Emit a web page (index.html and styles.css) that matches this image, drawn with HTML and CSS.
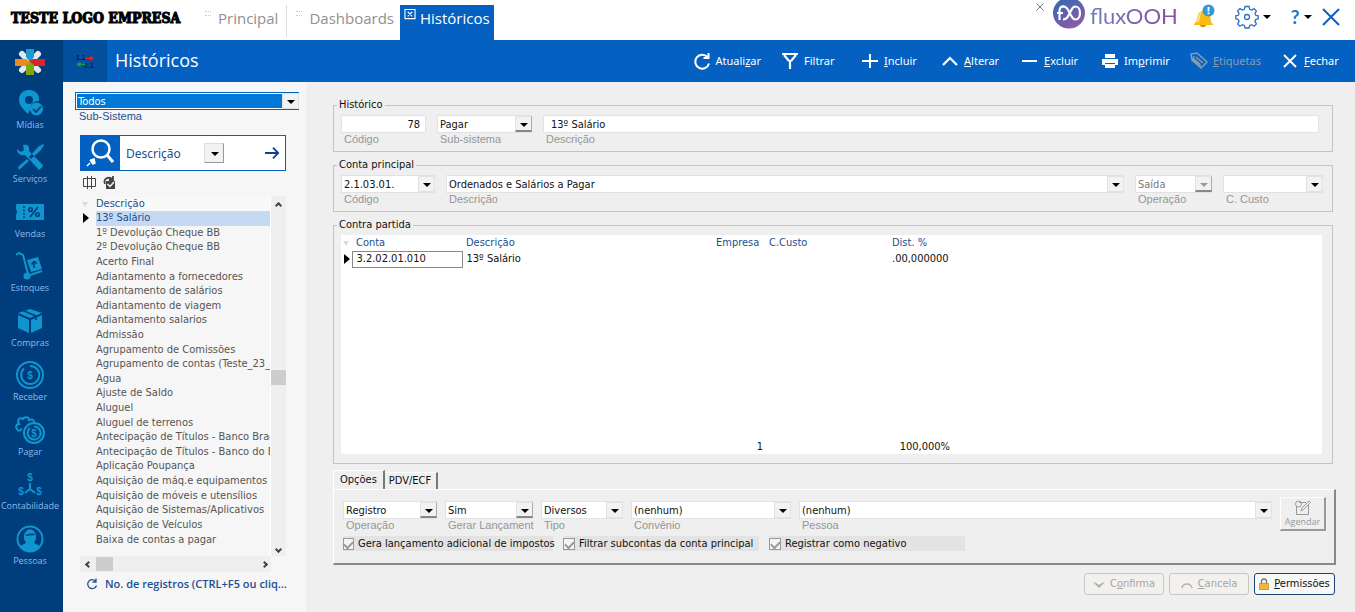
FILE: index.html
```html
<!DOCTYPE html>
<html lang="pt-BR">
<head>
<meta charset="utf-8">
<title>Históricos</title>
<meta name="viewport" content="width=device-width, initial-scale=1">
<link rel="stylesheet" href="styles.css">
</head>
<body>
<header class="top">
  <div class="company">TESTE LOGO EMPRESA</div>
  <nav class="tabs">
    <a class="tab" href="#"><span class="grip"></span>Principal</a>
    <a class="tab tab-dash" href="#"><span class="grip"></span>Dashboards</a>
    <a class="tab tab-active" href="#"><svg class="tab-close" viewBox="0 0 12 12"><path d="M.5 .5h11v10h-11zM3.500 3l5 5M8.500 3l-5 5" fill="none" stroke="#fff" stroke-width="1.200"/></svg>Históricos</a>
  </nav>
  <div class="top-right">
    <button class="mini-close" aria-label="Fechar aba"><svg viewBox="0 0 8 8"><path d="M.5 .5l7 7M7.500 .5l-7 7" stroke="#777" fill="none"/></svg></button>
    <div class="brand">
      <svg class="brand-mark" viewBox="0 0 32 30"><defs><linearGradient id="g" x1="0" x2="0.600" y1="0" y2="1"><stop offset="0" stop-color="#2c69b3"/><stop offset="1" stop-color="#8a5cab"/></linearGradient></defs><ellipse cx="16" cy="13" rx="16" ry="15.500" fill="url(#g)"/><path d="M6.500 20V11c0-4 2-5 5-4.500M4 13h6M10 6.500c5 0 5 4 7 7s2 6 5.500 6c6 0 6-13 0-13-3.500 0-3.500 3-5.500 6s-2 7-7 7" fill="none" stroke="#fff" stroke-width="2.200"/></svg>
      <span class="brand-name">fluxOOH</span>
    </div>
    <button class="bell" aria-label="Notificações"><svg viewBox="0 0 24 24"><path d="M2 20c3-2 3-5 4-9 1-5 9-6 12-1 1 4 0 8 3 10v1H2z" fill="#f9bc12"/><path d="M7 18c1-4 1-8 3-11-4 2-4 8-5 11z" fill="#fde08a"/><path d="M8 21h6c0 3-6 3-6 0z" fill="#d98e0b"/><circle cx="16.500" cy="6.500" r="6" fill="#3499d3"/><path d="M16.500 3v4.500M16.500 8.600v1.700" stroke="#fff" stroke-width="1.800"/></svg></button>
    <button class="menu-btn" aria-label="Configurações"><svg class="gear" viewBox="0 0 24 24"><path d="M10 1.500h4l.7 2.800 1.900.8 2.500-1.500 2.300 2.500-1.500 2.300.8 1.900 2.500.5v3l-2.500.7-.8 1.900 1.500 2.500-2.300 2.300-2.500-1.500-1.900.8-.7 2.500h-4l-.7-2.500-1.900-.8-2.500 1.500-2.300-2.300 1.500-2.500-.8-1.900L.8 13.800v-3l2.500-.5.8-1.900-1.500-2.300 2.300-2.500 2.500 1.500 1.900-.8z" fill="none" stroke="#2473c8" stroke-width="1.300"/><circle cx="12" cy="12" r="2.500" fill="none" stroke="#2473c8" stroke-width="1.300"/></svg><i class="caret"></i></button>
    <button class="menu-btn" aria-label="Ajuda"><span class="question">?</span><i class="caret"></i></button>
    <button class="app-close" aria-label="Fechar"><svg viewBox="0 0 18 16"><path d="M1 0l16 16M17 0L1 16" stroke="#0961c0" stroke-width="2" fill="none"/></svg></button>
  </div>
</header>
<div class="body">
  <aside class="side">
    <a class="home" href="#" aria-label="Início"><svg viewBox="0 0 30 28"><g stroke="#e4e8ec" stroke-width="6" stroke-linecap="round"><path d="M7 6l16 16M23 6L7 22"/></g><path d="M11 1h8v8l-4 5-4-5z" fill="#1c9ad6"/><path d="M0 11h11l4 3-4 4H0z" fill="#ef8a1d"/><path d="M30 11H18l-4 2 4 5h12z" fill="#d9252a"/><path d="M11 27h8V17l-4-3-4 3z" fill="#7fa712"/></svg></a>
    <nav class="modules">
      <a href="#"><svg viewBox="0 0 30 28"><path fill-rule="evenodd" d="M14 1c7 0 11 5 10 11-6 0-9 4-9 9l-2 4C8 20 4 16 4 11 4 5 8 1 14 1zm0 6a4 4 0 1 0 0 8 4 4 0 0 0 0-8z"/><circle cx="21.500" cy="20" r="6.500"/><path class="cut" d="M18 20l3 3 5-5.500"/></svg>Mídias</a>
      <a href="#"><svg viewBox="0 0 30 28"><path d="M2 6l4 3 3-2-1-5c5-1 7 2 6 6l13 13c2 3-2 6-4 4L10 12c-4 1-8-1-8-6zM28 1l-5 3-9 10 2 2L26 7l3-5zM12 16L3 24l1 3 10-9z"/><path d="M20 15l8 8-4 4-7-8z"/></svg>Serviços</a>
      <a href="#"><svg viewBox="0 0 30 28"><path d="M2 6h26q1 0 1 1v14q0 1-1 1H2q-1 0-1-1v-4q2-3 0-6V7q0-1 1-1z"/><path class="cut" d="M9 8v12" stroke-dasharray="2 1.500"/><path class="cut" d="M23 9l-8 10"/><circle class="cut" cx="15.500" cy="11.500" r="1.800"/><circle class="cut" cx="22.500" cy="16.500" r="1.800"/></svg>Vendas</a>
      <a href="#"><svg viewBox="0 0 30 28"><path class="line" d="M1 3l3-2 4 2 5 19M15 23l12-4"/><circle cx="12" cy="24" r="3.500"/><path d="M12 8l11-3 4 12-11 3z"/><path class="cut" d="M19 16v-6M16.500 12.500l2.500-3 3 2"/></svg>Estoques</a>
      <a href="#"><svg viewBox="0 0 30 28"><path d="M15 2l12 4-12 5L3 6zM3 8l11 5v13L3 21zM27 8l-11 5v13l11-5z"/><path class="cut" d="M8 3.500L21 9v4"/></svg>Compras</a>
      <a href="#"><svg viewBox="0 0 30 28"><circle class="line" cx="15" cy="14" r="13"/><path class="line" d="M9 7.500a9 9 0 1 0 6-2.500"/><text x="15" y="18">$</text></svg>Receber</a>
      <a href="#"><svg viewBox="0 0 30 28"><path class="line" d="M3 14c-3-2-2-6 1-6-2-4 0-7 4-5 2-3 6-2 6 1 4-1 5 0 5 2M7 13c-2 1-3 3-4 1"/><circle class="line" cx="19" cy="17" r="10"/><path class="line" d="M15 12a6.500 6.500 0 1 0 4-1.500"/><text x="19" y="20.500">$</text></svg>Pagar</a>
      <a href="#"><svg viewBox="0 0 30 28"><path class="line" d="M15 13v6l-5 4M15 19l5 4"/><text x="15" y="11">$</text><text x="6" y="25">$</text><text x="24" y="25">$</text></svg>Contabilidade</a>
      <a href="#"><svg viewBox="0 0 30 28"><circle class="line" cx="15" cy="14" r="12.500"/><path d="M9 12c0-10 12-10 12 0 0 4-2 5-2 6l6 3c-5 7-15 7-20 0l6-3c0-1-2-2-2-6z"/><path class="cut" d="M11 10c1 1 6-2 8 0"/></svg>Pessoas</a>
    </nav>
  </aside>
  <main class="main">
    <div class="titlebar">
      <div class="title-icon"><svg viewBox="0 0 18 14"><text x="0" y="6">1.1</text><text x="8" y="14">2.1</text><path d="M9 3.500h5V1.500l4 2.700-4 2.700V5H9z" fill="#e3202a"/><path d="M9 9.500H4.500V7.500L0 10.200l4.500 3V11H9z" fill="#159a56"/></svg></div>
      <h1>Históricos</h1>
      <div class="toolbar">
        <button><svg viewBox="0 0 18 16"><path d="M14.500 4A7 7 0 1 0 16 10.500M15.500 0v5h-5" fill="none" stroke="#fff" stroke-width="2"/></svg><span>Atuali<u>z</u>ar</span></button>
        <button><svg viewBox="0 0 18 16"><path d="M1 1h16M3 2l5 6M15 2l-5 6M9 7v9" fill="none" stroke="#fff" stroke-width="2.200"/></svg><span>Filtrar</span></button>
        <button><svg viewBox="0 0 18 16"><path d="M9 1v14M1 8h16" stroke="#fff" stroke-width="2"/></svg><span><u>I</u>ncluir</span></button>
        <button><svg viewBox="0 0 18 16"><path d="M2 12l7-7 7 7" fill="none" stroke="#fff" stroke-width="2.200"/></svg><span><u>A</u>lterar</span></button>
        <button><svg viewBox="0 0 18 16"><path d="M1 8h15" stroke="#fff" stroke-width="2"/></svg><span><u>E</u>xcluir</span></button>
        <button><svg viewBox="0 0 18 16"><path d="M4 1h10v4H4zM1 6h16v6h-3v-2H4v2H1zM4 11h10v4H4z" fill="#fff"/></svg><span>Im<u>p</u>rimir</span></button>
        <button disabled><svg viewBox="0 0 18 16"><path d="M1 1l6-1 10 9-6 6L2 7zM4 3l-1 3 8 7M6 4l7 6M4 6l6 5" fill="none" stroke="#8b9bb0" stroke-width="1.500"/></svg><span><u>E</u>tiquetas</span></button>
        <button><svg viewBox="0 0 18 16"><path d="M3 2l12 12M15 2L3 14" stroke="#fff" stroke-width="1.900"/></svg><span><u>F</u>echar</span></button>
      </div>
    </div>
    <div class="content">
      <section class="browse">
        <div class="combo combo-sub"><select id="subsys"><option>Todos</option></select></div>
        <label class="sub-label" for="subsys">Sub-Sistema</label>
        <div class="search">
          <span class="search-icon"><svg viewBox="0 0 30 28"><circle cx="15" cy="10" r="8.500" fill="none" stroke="#fff" stroke-width="2.500"/><path d="M21 16l6 7" stroke="#fff" stroke-width="3"/><path d="M1 27l3-3M4 21l3 4M5 21l3-1 1 4-2 1z" stroke="#fff" stroke-width="1.500" fill="#fff"/></svg></span>
          <div class="combo combo-search"><select aria-label="Campo de busca"><option>Descrição</option></select></div>
          <button class="go" aria-label="Buscar"><svg viewBox="0 0 14 12"><path d="M0 6h13M8 .7L13.200 6 8 11.300" fill="none" stroke="#0f3f9c" stroke-width="1.800"/></svg></button>
        </div>
        <div class="mini-tools">
          <button aria-label="Colunas"><svg viewBox="0 0 13 13"><path d="M.5 2.500h12v8H.5zM4.500 0v13M8.500 0v13" fill="none" stroke="#444"/></svg></button>
          <button aria-label="Marcar"><svg viewBox="0 0 13 13"><path d="M3 5h9v8H3z" fill="#444"/><path d="M2 8C0 3 5 0 9 3M10 0v4H6" fill="none" stroke="#444" stroke-width="1.800"/><path d="M4.500 8L7 10.500l4-4.500" fill="none" stroke="#f5f5f5" stroke-width="1.500"/></svg></button>
        </div>
        <div class="list">
          <div class="list-view">
            <table>
              <thead><tr><th class="mark"><i class="sort"></i></th><th>Descrição</th></tr></thead>
              <tbody>
                <tr class="selected"><td class="mark"><i class="pointer"></i></td><td>13º Salário</td></tr>
                <tr><td></td><td>1º Devolução Cheque BB</td></tr>
                <tr><td></td><td>2º Devolução Cheque BB</td></tr>
                <tr><td></td><td>Acerto Final</td></tr>
                <tr><td></td><td>Adiantamento a fornecedores</td></tr>
                <tr><td></td><td>Adiantamento de salários</td></tr>
                <tr><td></td><td>Adiantamento de viagem</td></tr>
                <tr><td></td><td>Adiantamento salarios</td></tr>
                <tr><td></td><td>Admissão</td></tr>
                <tr><td></td><td>Agrupamento de Comissões</td></tr>
                <tr><td></td><td>Agrupamento de contas (Teste_23_0</td></tr>
                <tr><td></td><td>Agua</td></tr>
                <tr><td></td><td>Ajuste de Saldo</td></tr>
                <tr><td></td><td>Aluguel</td></tr>
                <tr><td></td><td>Aluguel de terrenos</td></tr>
                <tr><td></td><td>Antecipação de Títulos - Banco Brade</td></tr>
                <tr><td></td><td>Antecipação de Títulos - Banco do Br</td></tr>
                <tr><td></td><td>Aplicação Poupança</td></tr>
                <tr><td></td><td>Aquisição de máq.e equipamentos</td></tr>
                <tr><td></td><td>Aquisição de móveis e utensílios</td></tr>
                <tr><td></td><td>Aquisição de Sistemas/Aplicativos</td></tr>
                <tr><td></td><td>Aquisição de Veículos</td></tr>
                <tr><td></td><td>Baixa de contas a pagar</td></tr>
              </tbody>
            </table>
          </div>
          <div class="vbar"><i class="chev up"></i><i class="vthumb"></i><i class="chev down"></i></div>
          <div class="hbar"><i class="chev left"></i><i class="hthumb"></i><i class="chev right"></i></div>
        </div>
        <button class="count"><svg viewBox="0 0 12 12"><path d="M9.500 3A4.500 4.500 0 1 0 10.500 7.500M10 .5v3.500H6.500" fill="none" stroke="#27538f" stroke-width="1.300"/></svg><span>No. de registros (CTRL+F5 ou cliq...</span></button>
      </section>
      <form class="form">
        <fieldset>
          <legend>Histórico</legend>
          <div class="row row-hist">
            <div class="field"><input id="cod" class="num" value="78"><label for="cod">Código</label></div>
            <div class="field"><div class="combo raised"><select id="sub"><option>Pagar</option></select></div><label for="sub">Sub-sistema</label></div>
            <div class="field"><input id="desc" value="13º Salário"><label for="desc">Descrição</label></div>
          </div>
        </fieldset>
        <fieldset>
          <legend>Conta principal</legend>
          <div class="row row-conta">
            <div class="field"><div class="combo"><select id="conta"><option>2.1.03.01.</option></select></div><label for="conta">Código</label></div>
            <div class="field"><div class="combo"><select id="cdesc"><option>Ordenados e Salários a Pagar</option></select></div><label for="cdesc">Descrição</label></div>
            <div class="field"><div class="combo raised off"><select id="oper" disabled><option>Saída</option></select></div><label for="oper">Operação</label></div>
            <div class="field"><div class="combo"><select id="custo"><option></option></select></div><label for="custo">C. Custo</label></div>
          </div>
        </fieldset>
        <fieldset class="grow">
          <legend>Contra partida</legend>
          <table class="grid">
            <colgroup><col class="c-mark"><col class="c-conta"><col class="c-desc"><col class="c-emp"><col class="c-custo"><col class="c-dist"><col></colgroup>
            <thead><tr><th class="mark"><i class="sort"></i></th><th>Conta</th><th>Descrição</th><th>Empresa</th><th>C.Custo</th><th>Dist. %</th><th></th></tr></thead>
            <tbody>
              <tr class="line-row"><td class="mark"><i class="pointer"></i></td><td class="focus">3.2.02.01.010</td><td>13º Salário</td><td></td><td></td><td>.00,000000</td><td></td></tr>
              <tr><td colspan="7"></td></tr>
            </tbody>
            <tfoot><tr><td></td><td></td><td></td><td class="right">1</td><td></td><td class="right">100,000%</td><td></td></tr></tfoot>
          </table>
        </fieldset>
        <div class="options">
          <div class="opt-tabs"><button type="button" class="opt-tab current">Opções</button><button type="button" class="opt-tab">PDV/ECF</button></div>
          <div class="opt-panel">
            <div class="opt-fields">
              <div class="field"><div class="combo raised"><select id="o1"><option>Registro</option></select></div><label for="o1">Operação</label></div>
              <div class="field"><div class="combo raised"><select id="o2"><option>Sim</option></select></div><label for="o2">Gerar Lançament</label></div>
              <div class="field"><div class="combo"><select id="o3"><option>Diversos</option></select></div><label for="o3">Tipo</label></div>
              <div class="field"><div class="combo"><select id="o4"><option>(nenhum)</option></select></div><label for="o4">Convênio</label></div>
              <div class="field"><div class="combo"><select id="o5"><option>(nenhum)</option></select></div><label for="o5">Pessoa</label></div>
              <button type="button" class="schedule" disabled><svg viewBox="0 0 17 15"><path d="M2.500 6v8.500h12V4M5 2.500h7M7 11l1-3 7-7 1.500 1.500-7 7z" fill="none" stroke="#999"/><circle cx="4.500" cy="4" r="3" fill="none" stroke="#999"/></svg><span>Agendar</span></button>
            </div>
            <div class="checks">
              <label><input type="checkbox" checked>Gera lançamento adicional de impostos</label>
              <label><input type="checkbox" checked>Filtrar subcontas da conta principal</label>
              <label><input type="checkbox" checked>Registrar como negativo</label>
            </div>
          </div>
        </div>
        <div class="actions">
          <button type="button" disabled><svg viewBox="0 0 12 8"><path d="M0 2l6 6 6-6-3 1-3 2-3-2z" fill="#a6b3a2"/></svg><span>C<u>o</u>nfirma</span></button>
          <button type="button" disabled><svg viewBox="0 0 12 8"><path d="M1 8c1-4 3-4 5-4s4 0 5 4" fill="none" stroke="#b5b0ae" stroke-width="1.500"/></svg><span><u>C</u>ancela</span></button>
          <button type="button" class="perm"><svg viewBox="0 0 10 12"><path d="M2.500 6V3.500a2.500 2.500 0 0 1 5 0V6" fill="none" stroke="#777" stroke-width="1.300"/><path d="M.5 5.500h9v6h-9z" fill="#efb937" stroke="#b98518" stroke-width=".7"/></svg><span><u>P</u>ermissões</span></button>
        </div>
      </form>
    </div>
  </main>
</div>
</body>
</html>
```

FILE: styles.css
```css
:root {
  --ui: "DejaVu Sans Condensed", "Noto Sans", sans-serif;
  --segoe: "Open Sans", "Noto Sans", sans-serif;
  --blue: #0461c1;
  --link: #1b4f91;
}
* { box-sizing: border-box; }
body {
  margin: 0;
  min-height: 100vh;
  display: flex;
  flex-direction: column;
  font: 11px/14px var(--ui);
  color: #111;
  background: #efefef;
}
button, input, select { font: inherit; color: inherit; margin: 0; padding: 0; border: 0; background: none; border-radius: 0; outline: 0; }
a { color: inherit; text-decoration: none; }
svg { display: block; flex: none; overflow: visible; }

/* top bar */
.top { display: flex; height: 40px; background: #fff; }
.company { width: 195px; padding: 8px 0 0 11px; font: bold 14px/20px "DejaVu Serif Condensed", "DejaVu Serif", serif; color: #000; white-space: nowrap; -webkit-text-stroke: 1px #000; }
.tabs { display: flex; font: 15px/20px var(--segoe); color: #909090; }
.tab { display: flex; gap: 7px; padding: 3px 8px 0 10px; margin: 5px 0 3px; border-right: 1px solid #ddd; }
.tab-dash { border: 0; padding: 3px 6px 0 9px; }
.tab-active { margin-bottom: 0; padding: 3px 4px 0 4px; gap: 4px; border: 0; background: var(--blue); color: #fff; }
.tab-close { width: 12px; height: 11px; margin-top: 1px; }
.grip { width: 6px; height: 5px; margin-top: 3px; border: 1px dotted #ccc; border-width: 1px 0; }
.top-right { display: flex; margin-left: auto; padding-right: 15px; }
.mini-close { align-self: flex-start; margin: 3px 9px 0 0; }
.mini-close svg { width: 8px; height: 8px; }
.brand { display: flex; gap: 5px; width: 123px; }
.brand-mark { width: 32px; height: 30px; }
.brand-name { font: 22px/32px Lato, sans-serif; color: transparent; background: linear-gradient(90deg, #6d7dbd, #7c5fb0 60%, #8c4f9f); background-clip: text; }
.bell { display: flex; margin: 4px 0 0 16px; }
.bell svg { width: 24px; height: 24px; }
.menu-btn { display: flex; align-items: center; gap: 4px; height: 34px; margin-left: 19px; }
.gear { width: 24px; height: 24px; }
.question { font: bold 19px/30px Lato, sans-serif; color: #2473c8; width: 10px; }
.caret { border: 4px solid transparent; border-top-color: #000; border-bottom: 0; }
.app-close { margin-left: 10px; height: 34px; }
.app-close svg { width: 18px; height: 16px; }

/* module rail */
.body { display: flex; flex: 1; }
.side { width: 63px; display: flex; flex-direction: column; background: #003d7c; padding: 0 3px 40px 0; }
.home { padding: 8px 15px 6px; }
.home svg { width: 30px; height: 28px; }
.modules { flex: 1; display: flex; flex-direction: column; font: 9px/12px var(--segoe); color: #8db9ea; text-align: center; }
.modules a { flex: 1 1 54px; max-height: 60px; display: flex; flex-direction: column; align-items: center; padding-top: 7px; gap: 2px; }
.modules svg { width: 30px; height: 28px; fill: #1096cf; }
.modules .line { fill: none; stroke: #1096cf; stroke-width: 2; }
.modules .cut { fill: none; stroke: #003d7c; stroke-width: 1.600; }
.modules text { font: bold 10px "Liberation Sans", sans-serif; text-anchor: middle; }

/* title bar */
.main { flex: 1; min-width: 0; display: flex; flex-direction: column; }
.titlebar { display: flex; height: 42px; background: var(--blue); color: #fff; }
.title-icon { width: 44px; display: grid; place-items: center; background: #024f9e; }
.title-icon svg { width: 18px; height: 14px; }
.title-icon text { font: bold 7px "Liberation Sans", sans-serif; fill: #0b1c33; }
h1 { margin: 0 0 0 8px; font: 18px/41px var(--segoe); }
.toolbar { margin-left: auto; padding-right: 14px; display: flex; gap: 20px; font: 11px/16px "Noto Sans", sans-serif; }
.toolbar button { display: flex; align-items: center; gap: 5px; min-width: 60px; }
.toolbar svg { width: 18px; height: 16px; }
.toolbar button:disabled { color: #8b9bb0; }

/* browse panel */
.content { flex: 1; display: flex; }
.browse { width: 243px; background: #f6f6f6; padding: 10px 7px 20px 12px; display: flex; flex-direction: column; color: var(--link); }
.combo { position: relative; display: flex; }
.combo select { appearance: none; flex: 1; min-width: 0; width: 100%; height: 18px; padding: 1px 18px 0 2px; background: #fff; border: 1px solid #e2e2e2; opacity: 1; color: #111; }
.combo::before { content: ""; position: absolute; right: 0; top: 1px; bottom: 1px; width: 15px; background: #f2f2f2; border: 1px solid #e2e2e2; pointer-events: none; }
.combo::after { content: ""; position: absolute; right: 4px; top: 8px; border: 4px solid transparent; border-top-color: #000; border-bottom: 0; pointer-events: none; }
.raised::before { border-right-color: #aaa; border-bottom: 2px solid #888; }
.off::after { border-top-color: #999; }
.combo.off select { color: #777; }
.combo.combo-sub select { background: #0078d7; color: #fff; border: 1px solid var(--blue); box-shadow: inset 0 0 0 1px #fff; }
.sub-label { font: 11px/13px "Liberation Sans", sans-serif; padding-left: 4px; }
.search { display: flex; align-items: center; height: 36px; margin: 12px 13px 0 5px; background: #fff; border: 1px solid var(--blue); }
.search-icon { width: 39px; height: 34px; display: grid; place-items: center; background: var(--blue); }
.search-icon svg { width: 30px; height: 28px; }
.combo-search { width: 104px; }
.combo.combo-search select { height: 22px; border: 0; font: 12px/16px "Noto Sans", sans-serif; padding-left: 6px; color: var(--link); }
.combo-search::before { width: 18px; top: 1px; bottom: 1px; border: 1px solid #999; border-top-color: #ddd; border-left-color: #ddd; }
.combo-search::after { right: 5px; top: 10px; }
.go { margin-left: auto; margin-right: 6px; }
.go svg { width: 14px; height: 12px; }
.mini-tools { display: flex; gap: 7px; margin: 5px 0 7px 8px; }
.mini-tools svg { width: 13px; height: 13px; }
.list { display: grid; grid-template: 1fr 16px / 1fr 15px; flex: 1; margin: 0 13px 0 5px; }
.list-view { overflow: hidden; border-right: 1px solid #fff; padding-top: 1px; }
table { border-collapse: collapse; table-layout: fixed; width: 100%; }
th, td { padding: 0; text-align: left; font-weight: normal; white-space: nowrap; overflow: hidden; }
th { color: var(--link); }
.list table { height: 350px; color: #555; }
.list .mark { width: 16px; }
.list th + th { background: #f9f9f9; }
.list .selected td + td { background: #c5daf2; color: var(--link); }
.sort { display: block; margin-left: 2px; width: 0; border: 3px solid transparent; border-top: 5px solid #ddd; border-bottom: 0; }
.pointer { display: block; margin-left: 3px; width: 0; border: 5px solid transparent; border-left: 6px solid #000; border-right: 0; }
.vbar, .hbar { display: flex; background: #efefef; align-items: center; }
.vbar { flex-direction: column; padding: 7px 0 4px; }
.hbar { padding: 0 4px 0 6px; }
.vthumb { width: 15px; height: 15px; margin: auto 0; background: #cdcdcd; }
.hthumb { width: 17px; height: 14px; margin: 0 auto 0 5px; background: #cdcdcd; }
.chev { width: 5px; height: 5px; border: solid #444; border-width: 2px 0 0 2px; }
.up { rotate: 45deg; }
.down { rotate: 225deg; }
.left { rotate: -45deg; }
.right.chev { rotate: 135deg; }
.count { display: flex; align-items: center; gap: 7px; margin: 4px 0 0 11px; font: 600 11px/16px var(--segoe); white-space: nowrap; }
.count svg { width: 12px; height: 12px; }

/* form */
.form { flex: 1; min-width: 0; display: flex; flex-direction: column; gap: 6px; padding: 16px 19px 17px 27px; }
fieldset { margin: 0 3px 0 0; min-width: 0; padding: 3px 13px 5px 7px; border: 1px solid #c4c4c4; }
legend { padding: 0 2px; margin-left: -4px; line-height: 14px; }
.grow { flex: 1; display: flex; flex-direction: column; padding: 3px 10px 9px 7px; }
.row, .opt-fields { display: grid; align-items: start; }
.row-hist { grid-template-columns: 85px 95px 1fr; column-gap: 11px; }
.row-conta { grid-template-columns: 94px 1fr 77px 100px; column-gap: 11px; margin-right: -4px; }
.field { min-width: 0; }
.field input { width: 100%; height: 18px; border: 1px solid #e2e2e2; background: #fff; padding: 0 7px; display: block; }
.field .num { text-align: right; padding-right: 5px; }
.field label { display: block; padding-left: 3px; font: 11px/13px "Liberation Sans", sans-serif; color: #969696; white-space: nowrap; }
.grid { flex: 1; height: 220px; background: #fff; }
.grid thead tr, .grid .line-row { height: 16px; }
.grid tfoot tr { height: 15px; }
.grid th, .grid td { padding-left: 4px; }
.grid .mark { padding: 0; }
.c-mark { width: 11px; }
.c-conta { width: 110px; }
.c-desc { width: 250px; }
.c-emp { width: 53px; }
.c-custo { width: 123px; }
.c-dist { width: 64px; }
.grid .focus { border: 1px solid #888; }
.grid .right { text-align: right; padding-right: 2px; }
.opt-tabs { display: flex; align-items: flex-end; }
.opt-tab { height: 17px; padding: 0 5px 0 4px; border: solid #fff; border-width: 1px 0 0; border-right: 2px solid #777; }
.opt-tab.current { height: 19px; padding: 0 6px; border-left: 1px solid #fff; }
.opt-panel { border: 1px solid #fff; border-right: 2px solid #888; border-bottom: 2px solid #888; padding: 7px 8px 12px 9px; }
.opt-fields { grid-template-columns: 94px 88px 82px 160px 1fr 46px; column-gap: 8px; }
.opt-fields .field { padding-top: 4px; }
.schedule { height: 34px; display: flex; flex-direction: column; align-items: center; justify-content: center; border: 1px solid #fff; border-right: 2px solid #999; border-bottom: 2px solid #999; font: 9px/13px var(--segoe); color: #999; }
.schedule svg { width: 17px; height: 15px; }
.checks { display: flex; gap: 10px; margin-top: 4px; }
.checks label { display: flex; align-items: center; gap: 4px; height: 15px; width: 210px; background: #e3e3e3; white-space: nowrap; }
.checks label:nth-child(2) { width: 196px; }
.checks label:nth-child(3) { width: 196px; }
.checks input { appearance: none; width: 12px; height: 12px; border: 1px solid #999; background: #f4f4f4; display: grid; place-items: center; }
.checks input:checked::before { content: ""; width: 7px; height: 4px; border: solid #999; border-width: 0 0 2px 2px; rotate: -45deg; }
.actions { display: flex; justify-content: flex-end; gap: 5px; margin-top: 2px; padding-right: 1px; }
.actions button { width: 80px; height: 22px; display: flex; align-items: center; justify-content: center; gap: 5px; border: 1px solid #c9c6c2; border-radius: 3px; background: #f3f1ee; color: #a5a5a5; }
.actions svg { width: 12px; height: 8px; }
.actions .perm { width: 81px; border-color: #1c4473; background: #f8f8f8; color: #111; }
.actions .perm svg { width: 10px; height: 12px; }
```
